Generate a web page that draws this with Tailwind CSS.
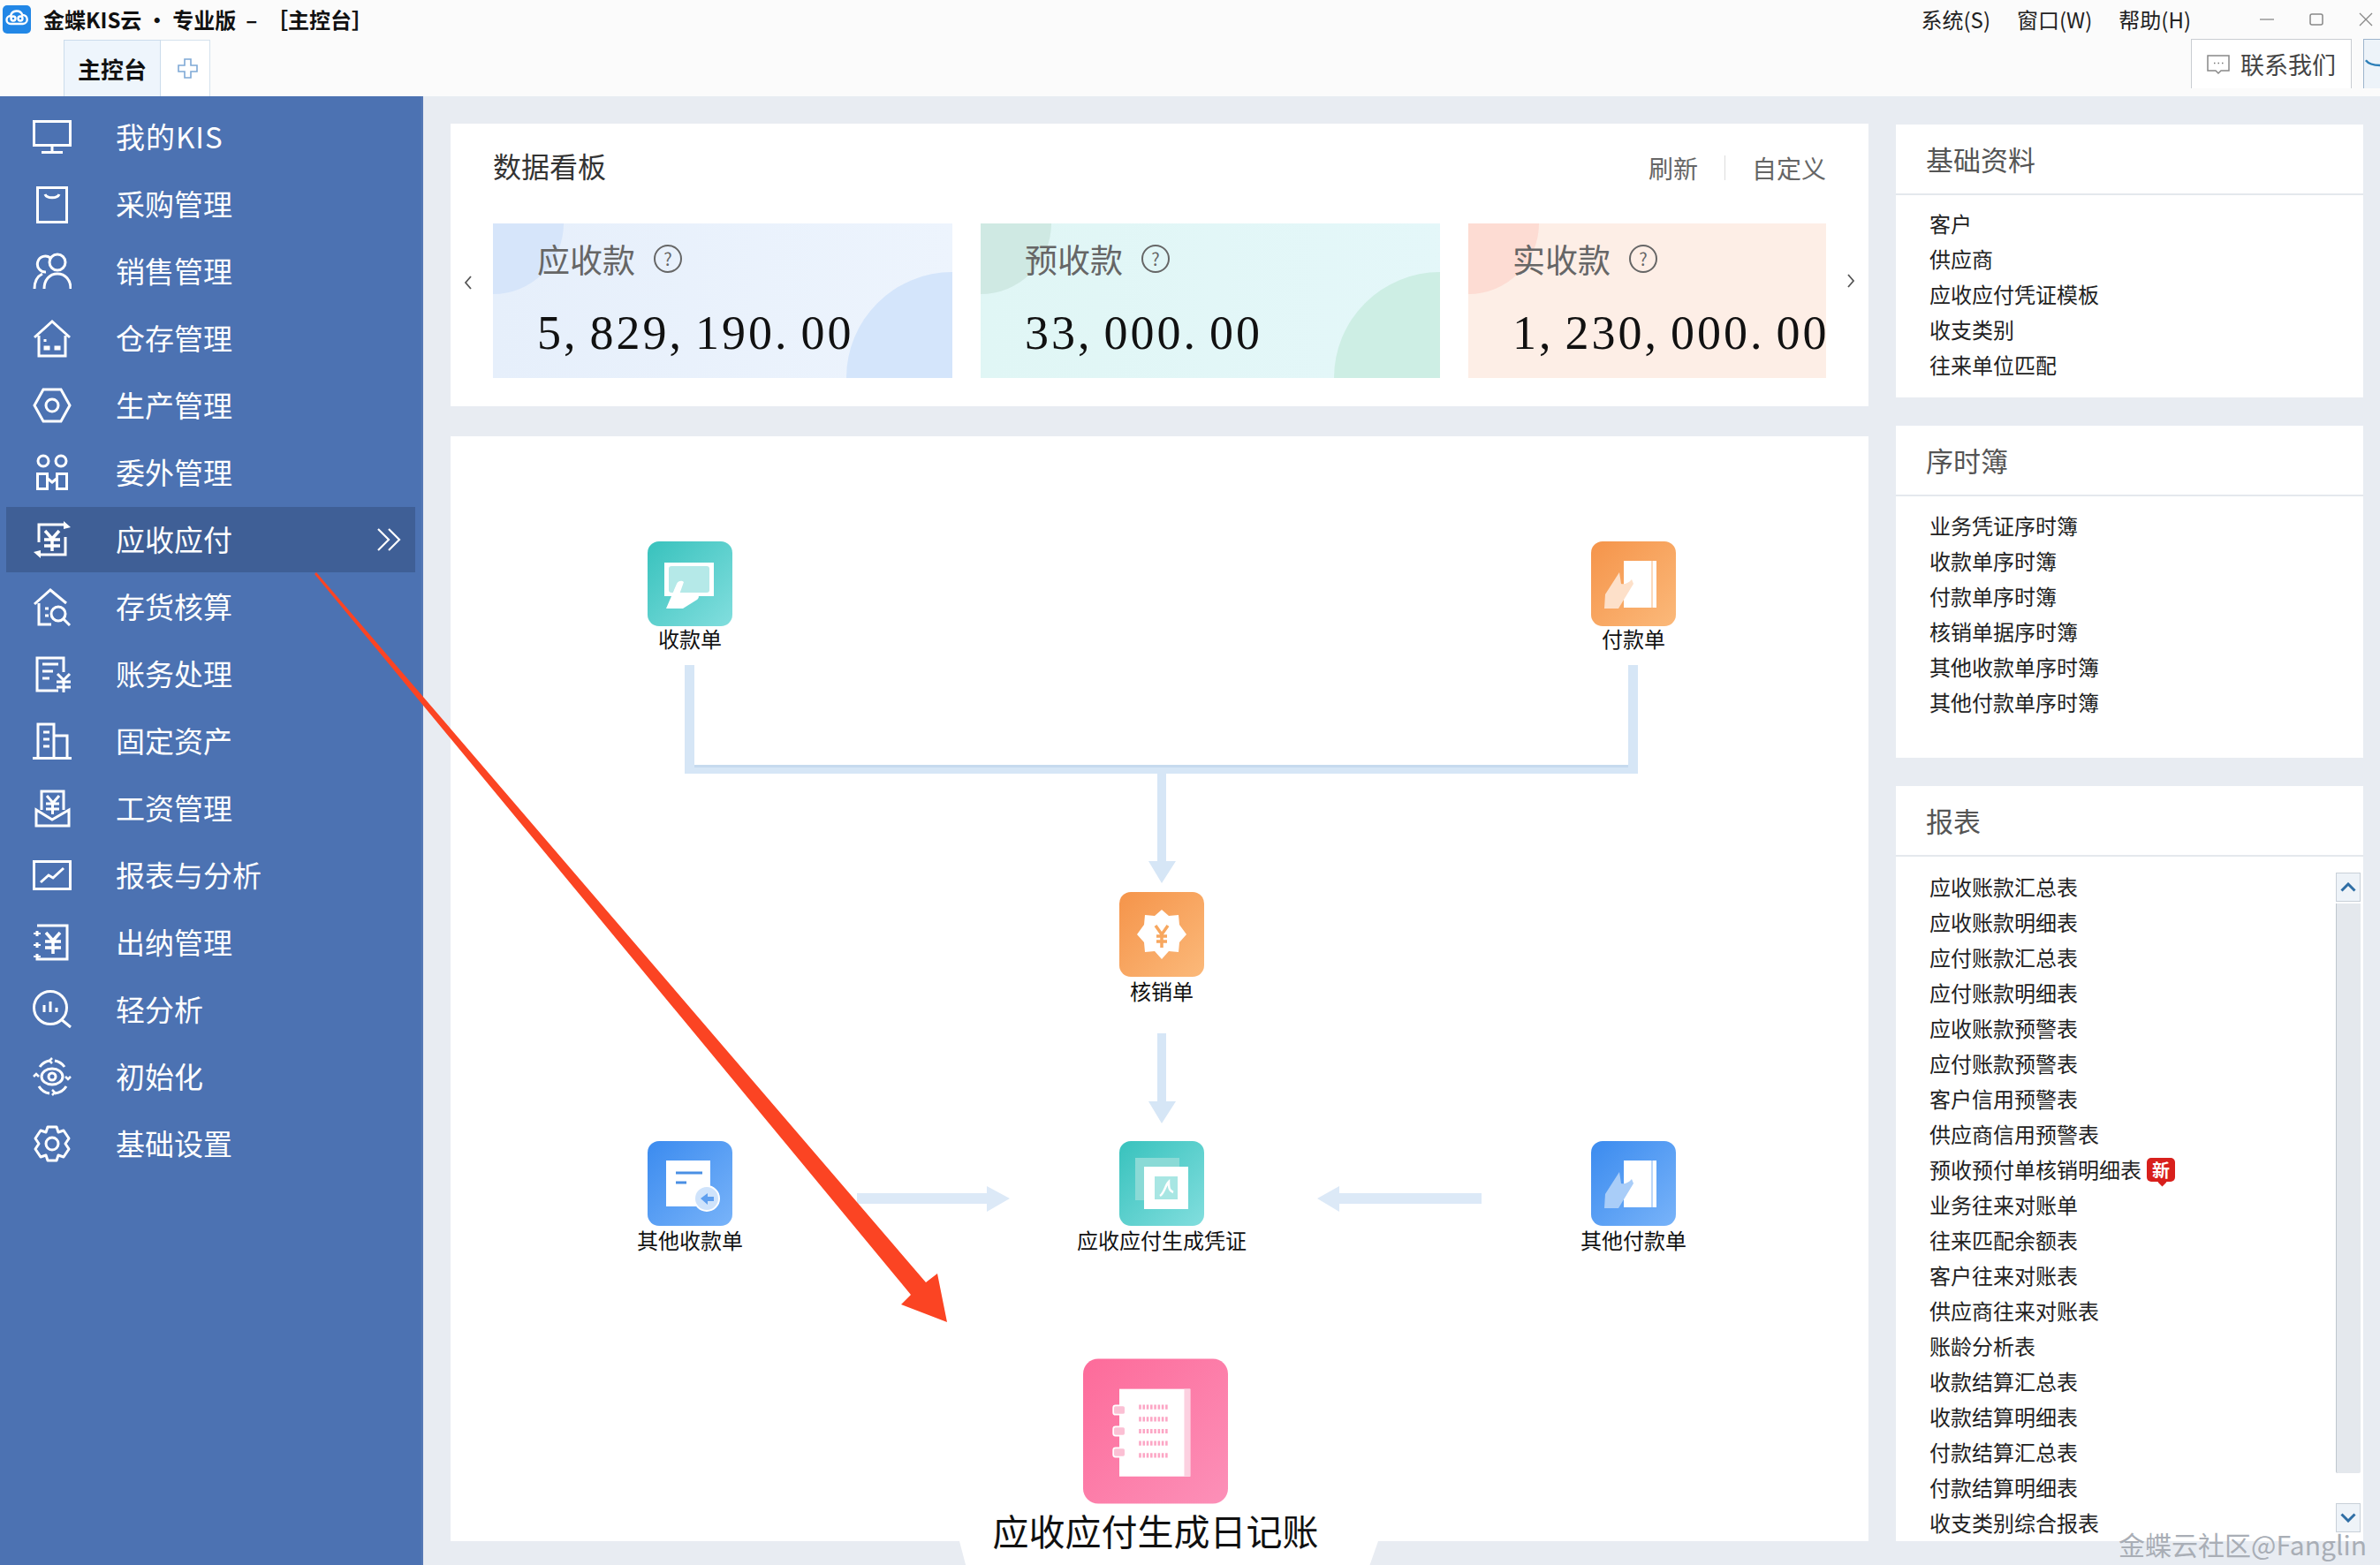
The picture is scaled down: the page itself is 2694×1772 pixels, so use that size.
<!DOCTYPE html>
<html lang="zh-CN">
<head>
<meta charset="utf-8">
<title>金蝶KIS云</title>
<script src="https://cdn.jsdelivr.net/npm/@tailwindcss/browser@4"></script>
</head>
<body class="w-[2694px] h-[1772px] overflow-hidden relative bg-[#e8ecf2] font-['Noto_Sans_CJK_SC','Liberation_Sans',sans-serif] text-[#222]">

<header class="h-[109px] bg-[#fbfbfb] flex flex-col relative">
  <div class="h-[45px] flex items-center justify-between">
    <div class="flex items-center pl-[3px]">
      <svg class="w-[32px] h-[32px]" viewBox="0 0 32 32"><rect width="32" height="32" rx="5" fill="#2287e6"/><path d="M9 21a4.500 4.500 0 0 1 0-9 7 7 0 0 1 13.400-1 5 5 0 0 1 .6 10Zm3-3.500a2.500 2.500 0 1 0 0-5 2.500 2.500 0 0 0 0 5Zm8 0a2.500 2.500 0 1 0 0-5 2.500 2.500 0 0 0 0 5Z" fill="none" stroke="#fff" stroke-width="2.400"/></svg>
      <span class="ml-[14px] text-[24px] leading-[32px] font-bold text-[#111] whitespace-pre">金蝶KIS云 · 专业版  –  ［主控台］</span>
    </div>
    <div class="flex items-center">
      <div class="flex gap-[30px] text-[24px] leading-[30px] text-[#222]"><span>系统(S)</span><span>窗口(W)</span><span>帮助(H)</span></div>
      <div class="flex items-center ml-[78px] mr-[8px] gap-[40px]">
        <svg class="w-[16px] h-[16px]" viewBox="0 0 16 16"><path d="M0 8h16" stroke="#999" stroke-width="1.500"/></svg>
        <svg class="w-[16px] h-[16px]" viewBox="0 0 16 16"><rect x="1" y="2" width="14" height="12" rx="2" fill="none" stroke="#888" stroke-width="1.500"/></svg>
        <svg class="w-[16px] h-[16px]" viewBox="0 0 16 16"><path d="M1 1l14 14M15 1L1 15" stroke="#888" stroke-width="1.300"/></svg>
      </div>
    </div>
  </div>
  <div class="flex-1 flex justify-between items-end">
    <div class="flex pl-[72px] h-[64px]">
      <div class="w-[110px] bg-[#eef5fc] border border-b-0 border-[#cbdcec] flex items-center justify-center text-[26px] font-bold text-[#111]">主控台</div>
      <div class="w-[56px] pl-[6px] bg-white border border-l-0 border-b-0 border-[#d5e2ee] flex items-center justify-center">
        <svg class="w-[23px] h-[23px]" viewBox="0 0 23 23"><path d="M8 1h7v7h7v7h-7v7H8v-7H1V8h7Z" fill="none" stroke="#7fa9d6" stroke-width="1.600"/></svg>
      </div>
    </div>
    <div class="flex h-[56px] mb-[9px]">
      <div class="w-[182px] border border-b-0 border-[#c9cdd2] bg-white flex items-center pl-[16px]">
        <svg class="w-[28px] h-[24px]" viewBox="0 0 28 24"><path d="M2 2h24v17H17l-3 3-3-3H2Z" fill="none" stroke="#888" stroke-width="1.500"/><path d="M9 10.500h1.500M13.500 10.500H15M18 10.500h1.500" stroke="#777" stroke-width="1.500"/></svg>
        <span class="ml-[11px] text-[27px] leading-[36px] text-[#444]">联系我们</span>
      </div>
      <div class="w-[19px] ml-[13px] border border-r-0 border-b-0 border-[#9db4cc] bg-[#edf3f9] flex items-center justify-center overflow-hidden">
        <svg class="w-[19px] h-[20px]" viewBox="0 0 19 20"><path d="M2 5c3 4 9 6 17 6" fill="none" stroke="#2c7fb8" stroke-width="2.500"/></svg>
      </div>
    </div>
  </div>
</header>

<div class="flex h-[1663px]">
  <aside class="w-[479px] shrink-0 bg-[#4c72b2] text-white pt-[8px] border-r-2 border-[#5578b5]">
    <ul class="text-[33px] leading-[44px]">
      <li class="h-[76px] mx-[7px] pl-[30px] flex items-center">
        <svg class="w-[44px] h-[44px] shrink-0" viewBox="0 0 44 44" fill="none" stroke="#fff" stroke-width="3"><rect x="1.500" y="4.500" width="41" height="27"/><path d="M22 32v6M10 39.500h24"/></svg>
        <span class="ml-[50px] pb-[3px] tracking-[1px]">我的KIS</span>
      </li>
      <li class="h-[76px] mx-[7px] pl-[30px] flex items-center">
        <svg class="w-[44px] h-[44px] shrink-0" viewBox="0 0 44 44" fill="none" stroke="#fff" stroke-width="3"><rect x="5.500" y="3.500" width="33" height="39"/><path d="M14 11c2 5 14 5 16 0"/></svg>
        <span class="ml-[50px] pb-[3px]">采购管理</span>
      </li>
      <li class="h-[76px] mx-[7px] pl-[30px] flex items-center">
        <svg class="w-[44px] h-[44px] shrink-0" viewBox="0 0 44 44" fill="none" stroke="#fff" stroke-width="3"><circle cx="28" cy="12" r="9"/><path d="M20 7a9 9 0 1 0-5 16M2 42c0-8 3-14 9-17M13 42c0-10 6-17 15-17s15 7 15 17"/></svg>
        <span class="ml-[50px] pb-[3px]">销售管理</span>
      </li>
      <li class="h-[76px] mx-[7px] pl-[30px] flex items-center">
        <svg class="w-[44px] h-[44px] shrink-0" viewBox="0 0 44 44" fill="none" stroke="#fff" stroke-width="3"><path d="M2 21 22 3l20 18M7 19v23h30V19"/><path d="M14 23v3M14 32h4v2h-4ZM26 32h4v2h-4Z" fill="#fff"/></svg>
        <span class="ml-[50px] pb-[3px]">仓存管理</span>
      </li>
      <li class="h-[76px] mx-[7px] pl-[30px] flex items-center">
        <svg class="w-[44px] h-[44px] shrink-0" viewBox="0 0 44 44" fill="none" stroke="#fff" stroke-width="3"><path d="M12 4h20l10 18-10 18H12L2 22Z"/><circle cx="22" cy="22" r="7"/></svg>
        <span class="ml-[50px] pb-[3px]">生产管理</span>
      </li>
      <li class="h-[76px] mx-[7px] pl-[30px] flex items-center">
        <svg class="w-[44px] h-[44px] shrink-0" viewBox="0 0 44 44" fill="none" stroke="#fff" stroke-width="3"><circle cx="12" cy="9" r="6"/><circle cx="32" cy="9" r="6"/><rect x="5.500" y="23.500" width="11" height="17"/><rect x="27.500" y="23.500" width="11" height="17"/><path d="M17 29l5 4 5-4"/></svg>
        <span class="ml-[50px] pb-[3px]">委外管理</span>
      </li>
      <li class="h-[74px] my-[1px] mx-[7px] pl-[30px] pr-[16px] flex items-center bg-[#3f5f96]">
        <svg class="w-[44px] h-[44px] shrink-0" viewBox="0 0 44 44" fill="none" stroke="#fff" stroke-width="3"><path d="M7 25V5h29M37 19v20H9"/><path d="M35 1l8 7-8 2ZM9 43l-8-7 8-2Z" fill="#fff" stroke="none"/><path d="M14 12l8 9 8-9M13 22h18M13 29h18M22 21v14" stroke-width="3.500"/></svg>
        <span class="ml-[50px] pb-[3px] flex-1">应收应付</span>
        <svg class="w-[27px] h-[28px]" viewBox="0 0 27 28" fill="none" stroke="#fff" stroke-width="2.200"><path d="M1 2l12 12L1 26M13 2l12 12-12 12"/></svg>
      </li>
      <li class="h-[76px] mx-[7px] pl-[30px] flex items-center">
        <svg class="w-[44px] h-[44px] shrink-0" viewBox="0 0 44 44" fill="none" stroke="#fff" stroke-width="3"><path d="M2 19 20 3l18 15M7 18v24h14"/><circle cx="29" cy="30" r="8"/><path d="M35 36l7 7M14 24h4M14 32h4"/></svg>
        <span class="ml-[50px] pb-[3px]">存货核算</span>
      </li>
      <li class="h-[76px] mx-[7px] pl-[30px] flex items-center">
        <svg class="w-[44px] h-[44px] shrink-0" viewBox="0 0 44 44" fill="none" stroke="#fff" stroke-width="3"><path d="M35 20V4H5v37h24"/><path d="M11 11h18M11 19h12M11 27h8"/><path d="M28 22l7 7 7-7M27 31h16M27 37h16M35 29v14"/></svg>
        <span class="ml-[50px] pb-[3px]">账务处理</span>
      </li>
      <li class="h-[76px] mx-[7px] pl-[30px] flex items-center">
        <svg class="w-[44px] h-[44px] shrink-0" viewBox="0 0 44 44" fill="none" stroke="#fff" stroke-width="3"><path d="M6 41V3h18v38M24 16h15v25M0 41.500h44M12 12h7M12 20h7M12 28h7"/></svg>
        <span class="ml-[50px] pb-[3px]">固定资产</span>
      </li>
      <li class="h-[76px] mx-[7px] pl-[30px] flex items-center">
        <svg class="w-[44px] h-[44px] shrink-0" viewBox="0 0 44 44" fill="none" stroke="#fff" stroke-width="3"><path d="M10 24V3h25v21"/><path d="M4 24v18h37V24L22 35Z"/><path d="M16 8l7 8 7-8M15 17h15M15 23h15M22.500 16v13"/></svg>
        <span class="ml-[50px] pb-[3px]">工资管理</span>
      </li>
      <li class="h-[76px] mx-[7px] pl-[30px] flex items-center">
        <svg class="w-[44px] h-[44px] shrink-0" viewBox="0 0 44 44" fill="none" stroke="#fff" stroke-width="3"><rect x="1.500" y="6.500" width="41" height="31"/><path d="M9 30l9-8 5 3 12-11"/></svg>
        <span class="ml-[50px] pb-[3px]">报表与分析</span>
      </li>
      <li class="h-[76px] mx-[7px] pl-[30px] flex items-center">
        <svg class="w-[44px] h-[44px] shrink-0" viewBox="0 0 44 44" fill="none" stroke="#fff" stroke-width="3"><path d="M5 3h34v38H5v-6M5 28v-6M5 15V9"/><path d="M1 12h8M1 25h8M1 38h8" stroke-width="2"/><path d="M15 11l8 9 8-9M14 21h18M14 28h18M23 20v15" stroke-width="3.500"/></svg>
        <span class="ml-[50px] pb-[3px]">出纳管理</span>
      </li>
      <li class="h-[76px] mx-[7px] pl-[30px] flex items-center">
        <svg class="w-[44px] h-[44px] shrink-0" viewBox="0 0 44 44" fill="none" stroke="#fff" stroke-width="3"><circle cx="20" cy="20" r="18.500"/><path d="M32 33l11 9M13 17v8M20 13v12M27 20v5"/></svg>
        <span class="ml-[50px] pb-[3px]">轻分析</span>
      </li>
      <li class="h-[76px] mx-[7px] pl-[30px] flex items-center">
        <svg class="w-[44px] h-[44px] shrink-0" viewBox="0 0 44 44" fill="none" stroke="#fff" stroke-width="3"><ellipse cx="22" cy="22" rx="12" ry="9"/><circle cx="22" cy="22" r="4"/><path d="M8 11a17 17 0 0 1 11-7M25 4a17 17 0 0 1 11 7M38 33a17 17 0 0 1-13 8M19 41a17 17 0 0 1-12-8"/><path d="M22 1l-3 3 3 3M22 43l3-3-3-3M1 22l3-3 3 3M43 22l-3 3-3-3" stroke-width="2.500"/></svg>
        <span class="ml-[50px] pb-[3px]">初始化</span>
      </li>
      <li class="h-[76px] mx-[7px] pl-[30px] flex items-center">
        <svg class="w-[44px] h-[44px] shrink-0" viewBox="0 0 44 44" fill="none" stroke="#fff" stroke-width="3"><path d="M17 3h10l2 6 6-2 6 9-4 6 4 6-6 9-6-2-2 6H17l-2-6-6 2-6-9 4-6-4-6 6-9 6 2Z" stroke-linejoin="round"/><circle cx="22" cy="22" r="7"/></svg>
        <span class="ml-[50px] pb-[3px]">基础设置</span>
      </li>
    </ul>
  </aside>

  <main class="flex-1 flex pt-[31px] pl-[31px] pr-[19px] gap-[31px] h-[1636px]">
    <div class="w-[1605px] shrink-0 flex flex-col gap-[34px]">
      <section class="h-[320px] bg-white relative px-[48px] pt-[27px]">
        <div class="flex items-start justify-between h-[40px]">
          <h2 class="text-[32px] leading-[40px] font-normal text-[#333]">数据看板</h2>
          <div class="flex items-center mt-[5px] text-[28px] leading-[36px] text-[#666]">
            <span>刷新</span>
            <span class="w-px h-[28px] bg-[#ddd] mx-[30px]"></span>
            <span>自定义</span>
          </div>
        </div>
        <div class="absolute left-[14px] top-[171px]"><svg class="w-[12px] h-[18px]" viewBox="0 0 12 18" fill="none" stroke="#555" stroke-width="1.800"><path d="M9 2 3 9l6 7"/></svg></div>
        <div class="absolute right-[14px] top-[169px]"><svg class="w-[12px] h-[18px]" viewBox="0 0 12 18" fill="none" stroke="#555" stroke-width="1.800"><path d="M3 2l6 7-6 7"/></svg></div>
        <div class="mt-[46px] flex gap-[32px] overflow-hidden w-[1509px]">
          <div class="w-[520px] h-[175px] shrink-0 relative overflow-hidden bg-gradient-to-r from-[#e6effb] to-[#edf4fd] pl-[50px]">
            <div class="absolute left-0 top-0 w-[80px] h-[80px] rounded-br-full bg-[#d6e5fa]"></div>
            <div class="absolute right-0 bottom-0 w-[120px] h-[120px] rounded-tl-full bg-[#d4e5fb]"></div>
            <div class="relative flex items-center pt-[19px] h-[61px] text-[37px] leading-[42px] text-[#666]">应收款<span class="ml-[21px] w-[32px] h-[32px] rounded-full border-2 border-[#666] flex items-center justify-center text-[20px] leading-none">?</span></div>
            <div class="relative mt-[33px] font-['Liberation_Serif',serif] text-[54px] leading-[60px] tracking-[3px] text-[#111] whitespace-nowrap">5<span class="tracking-[16px]">,</span>829<span class="tracking-[16px]">,</span>190<span class="tracking-[16px]">.</span>00</div>
          </div>
          <div class="w-[520px] h-[175px] shrink-0 relative overflow-hidden bg-gradient-to-r from-[#e0f6f5] to-[#e4f7f9] pl-[50px]">
            <div class="absolute left-0 top-0 w-[80px] h-[80px] rounded-br-full bg-[#cfe9e3]"></div>
            <div class="absolute right-0 bottom-0 w-[120px] h-[120px] rounded-tl-full bg-[#cdeee4]"></div>
            <div class="relative flex items-center pt-[19px] h-[61px] text-[37px] leading-[42px] text-[#666]">预收款<span class="ml-[21px] w-[32px] h-[32px] rounded-full border-2 border-[#666] flex items-center justify-center text-[20px] leading-none">?</span></div>
            <div class="relative mt-[33px] font-['Liberation_Serif',serif] text-[54px] leading-[60px] tracking-[3px] text-[#111] whitespace-nowrap">33<span class="tracking-[16px]">,</span>000<span class="tracking-[16px]">.</span>00</div>
          </div>
          <div class="w-[520px] h-[175px] shrink-0 relative overflow-hidden bg-[#fdeee6] pl-[50px]">
            <div class="absolute left-0 top-0 w-[80px] h-[80px] rounded-br-full bg-[#fddcd3]"></div>
            <div class="relative flex items-center pt-[19px] h-[61px] text-[37px] leading-[42px] text-[#666]">实收款<span class="ml-[21px] w-[32px] h-[32px] rounded-full border-2 border-[#666] flex items-center justify-center text-[20px] leading-none">?</span></div>
            <div class="relative mt-[33px] font-['Liberation_Serif',serif] text-[54px] leading-[60px] tracking-[3px] text-[#111] whitespace-nowrap">1<span class="tracking-[16px]">,</span>230<span class="tracking-[16px]">,</span>000<span class="tracking-[16px]">.</span>00</div>
          </div>
        </div>
      </section>

      <section class="h-[1251px] shrink-0 bg-white relative">
        <div class="absolute left-[576px] top-[1251px] w-[474px] h-[27px] bg-white [clip-path:polygon(0_0,100%_0,98%_100%,1.500%_100%)]"></div>
        <svg class="absolute left-0 top-0 w-[1605px] h-[1251px]" viewBox="0 0 1605 1251" fill="#d6e6f6">
          <path d="M265 259h11v113h1057V259h11v123H810v99h11l-16 25-15-25h10v-99H265Z"/>
          <path d="M276 372h1057v3H276Z" fill="#c6daee"/>
          <path d="M800 676h10v77h11l-16 25-15-25h10Z"/>
          <path d="M460 857h147v-8l26 14-26 15v-9H460Z" fill="#dce9f7"/>
          <path d="M1167 857h-161v-8l-25 14 25 15v-9h161Z" fill="#dce9f7"/>
        </svg>

        <div class="absolute left-[171px] top-[119px] w-[200px] flex flex-col items-center text-[24px] leading-[28px] text-[#111]">
          <svg class="w-[96px] h-[96px]" viewBox="0 0 96 96"><defs><linearGradient id="teal" x1="0" y1="0" x2="1" y2="1"><stop offset="0" stop-color="#38c2bd"/><stop offset="1" stop-color="#82dede"/></linearGradient></defs><rect width="96" height="96" rx="13" fill="url(#teal)"/><rect x="19" y="24" width="56" height="38" fill="#fff"/><rect x="24" y="28" width="46" height="30" rx="3" fill="#b5e9e8"/><path d="M21 76l12-28c2-4 6-4 8-2l-5 14h20c2 0 3 4 0 6L40 76Z" fill="#fff"/></svg>
          <span>收款单</span>
        </div>
        <div class="absolute left-[1239px] top-[119px] w-[200px] flex flex-col items-center text-[24px] leading-[28px] text-[#111]">
          <svg class="w-[96px] h-[96px]" viewBox="0 0 96 96"><defs><linearGradient id="orange" x1="0" y1="0" x2="1" y2="1"><stop offset="0" stop-color="#f5944a"/><stop offset="1" stop-color="#fbb97a"/></linearGradient></defs><rect width="96" height="96" rx="13" fill="url(#orange)"/><rect x="37" y="22" width="37" height="53" fill="#fff"/><rect x="68" y="22" width="2" height="53" fill="#fcd9bb"/><path d="M15 76l1-16 16-25 2 13c4 1 9-1 12-5l2 5-17 28Z" fill="#fde0c9"/></svg>
          <span>付款单</span>
        </div>
        <div class="absolute left-[705px] top-[516px] w-[200px] flex flex-col items-center text-[24px] leading-[28px] text-[#111]">
          <svg class="w-[96px] h-[96px]" viewBox="0 0 96 96"><rect width="96" height="96" rx="13" fill="url(#orange)"/><path d="M48 20l8 7 11-1 1 11 8 11-8 9-1 11-11-1-8 9-8-9-11 1-1-11-8-9 8-11 1-11 11 1Z" fill="#fff"/><path d="M41 38l7 10 7-10M42 50h12M42 56h12M48 48v15" fill="none" stroke="#f7a75f" stroke-width="3.500"/></svg>
          <span class="mt-[2px]">核销单</span>
        </div>
        <div class="absolute left-[171px] top-[798px] w-[200px] flex flex-col items-center text-[24px] leading-[28px] text-[#111]">
          <svg class="w-[96px] h-[96px]" viewBox="0 0 96 96"><defs><linearGradient id="blue" x1="0" y1="0" x2="1" y2="1"><stop offset="0" stop-color="#3b8bef"/><stop offset="1" stop-color="#78b3f9"/></linearGradient></defs><rect width="96" height="96" rx="13" fill="url(#blue)"/><rect x="21" y="22" width="50" height="52" fill="#fff"/><path d="M32 36h30M32 47h12" stroke="#4a8fe4" stroke-width="3"/><circle cx="67" cy="65" r="14" fill="#cfe3fb" stroke="#fff" stroke-width="2"/><path d="M60 65l8-6v4h7v5h-7v4Z" fill="#5f9fef"/></svg>
          <span class="mt-[2px]">其他收款单</span>
        </div>
        <div class="absolute left-[705px] top-[798px] w-[200px] flex flex-col items-center text-[24px] leading-[28px] text-[#111]">
          <svg class="w-[96px] h-[96px]" viewBox="0 0 96 96"><rect width="96" height="96" rx="13" fill="url(#teal)"/><rect x="18" y="19" width="50" height="48" fill="#8adad6"/><rect x="28" y="29" width="50" height="48" fill="#fff"/><path d="M40 40h26v26H40Z" fill="#a8e6e3"/><path d="M46 62c5-3 6-12 10-16 0 6 0 10 5 12" fill="none" stroke="#fff" stroke-width="2.500"/></svg>
          <span class="mt-[2px]">应收应付生成凭证</span>
        </div>
        <div class="absolute left-[1239px] top-[798px] w-[200px] flex flex-col items-center text-[24px] leading-[28px] text-[#111]">
          <svg class="w-[96px] h-[96px]" viewBox="0 0 96 96"><rect width="96" height="96" rx="13" fill="url(#blue)"/><rect x="37" y="22" width="37" height="53" fill="#fff"/><rect x="68" y="22" width="2" height="53" fill="#bcd7f9"/><path d="M15 76l1-16 16-25 2 13c4 1 9-1 12-5l2 5-17 28Z" fill="#a9cdf8"/></svg>
          <span class="mt-[2px]">其他付款单</span>
        </div>
        <div class="absolute left-[548px] top-[1044px] w-[500px] flex flex-col items-center text-[41px] leading-[58px] text-[#111]">
          <svg class="w-[164px] h-[165px]" viewBox="0 0 96 96"><defs><linearGradient id="pink" x1="0" y1="0" x2="1" y2="1"><stop offset="0" stop-color="#fd6b9a"/><stop offset="1" stop-color="#fc90b8"/></linearGradient></defs><rect width="96" height="96" rx="10" fill="url(#pink)"/><rect x="24" y="20" width="47" height="58" fill="#fff"/><rect x="67" y="20" width="4" height="58" fill="#fcd0e0"/><path d="M37 32h19M37 40h19M37 48h19M37 56h19M37 64h19" stroke="#fca6c5" stroke-width="3" stroke-dasharray="1.500 1"/><rect x="20" y="31" width="8" height="6" rx="1.500" fill="#fbc0d4" stroke="#fff"/><rect x="20" y="45" width="8" height="6" rx="1.500" fill="#fbc0d4" stroke="#fff"/><rect x="20" y="59" width="8" height="6" rx="1.500" fill="#fbc0d4" stroke="#fff"/></svg>
          <span>应收应付生成日记账</span>
        </div>
      </section>
    </div>

    <div class="w-[529px] shrink-0 flex flex-col gap-[32px] pt-[1px]">
      <section class="h-[309px] bg-white">
        <h3 class="h-[80px] pl-[34px] flex items-center border-b-2 border-[#e4e8ed] text-[31px] font-normal text-[#555]">基础资料</h3>
        <ul class="pt-[12px] pl-[38px] text-[24px] leading-[40px] text-[#222]">
          <li>客户</li>
          <li>供应商</li>
          <li>应收应付凭证模板</li>
          <li>收支类别</li>
          <li>往来单位匹配</li>
        </ul>
      </section>
      <section class="h-[376px] bg-white">
        <h3 class="h-[80px] pl-[34px] flex items-center border-b-2 border-[#e4e8ed] text-[31px] font-normal text-[#555]">序时簿</h3>
        <ul class="pt-[13px] pl-[38px] text-[24px] leading-[40px] text-[#222]">
          <li>业务凭证序时簿</li>
          <li>收款单序时簿</li>
          <li>付款单序时簿</li>
          <li>核销单据序时簿</li>
          <li>其他收款单序时簿</li>
          <li>其他付款单序时簿</li>
        </ul>
      </section>
      <section class="h-[855px] bg-white">
        <h3 class="h-[80px] pl-[34px] flex items-center border-b-2 border-[#e4e8ed] text-[31px] font-normal text-[#555]">报表</h3>
        <div class="flex">
          <ul class="flex-1 pt-[14px] pl-[38px] text-[24px] leading-[40px] text-[#222] h-[775px] overflow-hidden">
            <li>应收账款汇总表</li>
            <li>应收账款明细表</li>
            <li>应付账款汇总表</li>
            <li>应付账款明细表</li>
            <li>应收账款预警表</li>
            <li>应付账款预警表</li>
            <li>客户信用预警表</li>
            <li>供应商信用预警表</li>
            <li class="flex items-center">预收预付单核销明细表<span class="relative ml-[6px] w-[32px] h-[27px] rounded-[5px] bg-[#d8201c] text-white text-[20px] leading-[27px] text-center font-bold">新<span class="absolute left-[14px] top-[24px] w-[7px] h-[7px] bg-[#d8201c] rotate-45"></span></span></li>
            <li>业务往来对账单</li>
            <li>往来匹配余额表</li>
            <li>客户往来对账表</li>
            <li>供应商往来对账表</li>
            <li>账龄分析表</li>
            <li>收款结算汇总表</li>
            <li>收款结算明细表</li>
            <li>付款结算汇总表</li>
            <li>付款结算明细表</li>
            <li>收支类别综合报表</li>
          </ul>
          <div class="w-[28px] mr-[3px] mt-[18px] h-[747px] flex flex-col">
            <div class="h-[33px] bg-[#eef3f8] border border-[#c8d0d8] flex items-center justify-center"><svg class="w-[18px] h-[11px]" viewBox="0 0 18 11" fill="none" stroke="#2f6ea5" stroke-width="3"><path d="M1.500 9.500 9 2l7.500 7.500"/></svg></div>
            <div class="mt-[2px] h-[645px] bg-[#e4e8ed] border-l border-[#bfc6ce] rounded-b-[2px]"></div>
            <div class="flex-1"></div>
            <div class="h-[33px] bg-[#eef3f8] border border-[#c8d0d8] flex items-center justify-center"><svg class="w-[18px] h-[11px]" viewBox="0 0 18 11" fill="none" stroke="#2f6ea5" stroke-width="3"><path d="M1.500 1.500 9 9l7.500-7.500"/></svg></div>
          </div>
        </div>
      </section>
    </div>
  </main>
</div>

<svg class="absolute left-0 top-0 w-[2694px] h-[1772px] pointer-events-none" viewBox="0 0 2694 1772"><path d="M358 648 1048 1452 1061 1442 1072 1497 1020 1477 1031 1466 356 650Z" fill="#fb4423"/></svg>
<span class="absolute left-[2398px] top-[1729px] text-[30px] leading-[38px] text-[#a9aeb6] whitespace-nowrap">金蝶云社区@Fanglin</span>
</body>
</html>
